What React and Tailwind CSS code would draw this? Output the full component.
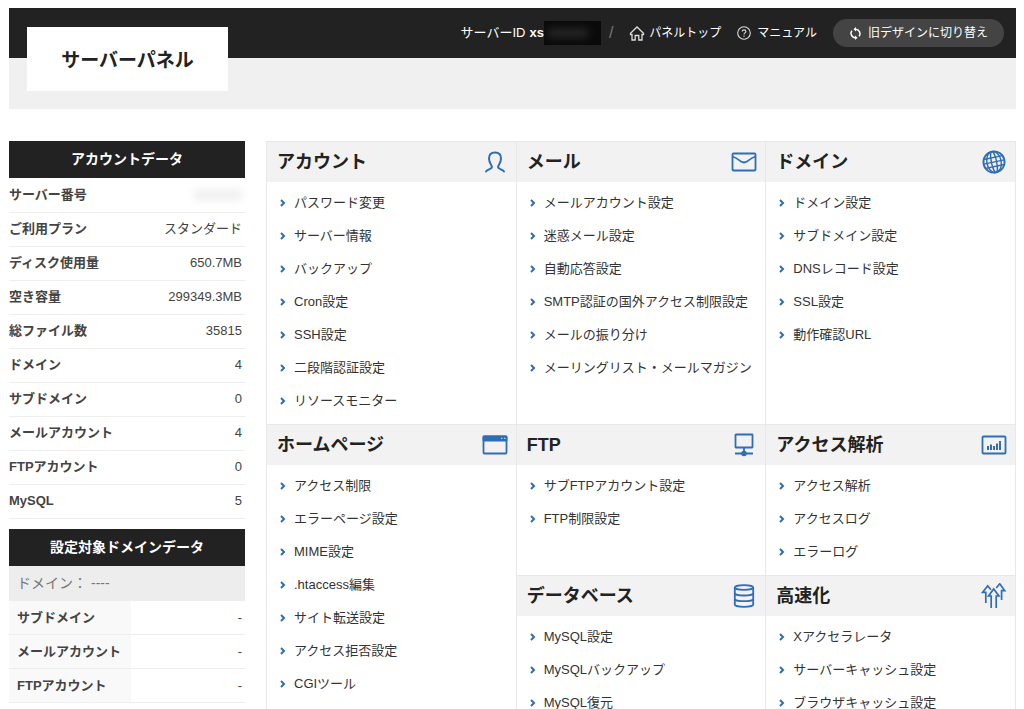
import React from 'react';

const accountData = [
  { label: 'サーバー番号', value: '' },
  { label: 'ご利用プラン', value: 'スタンダード' },
  { label: 'ディスク使用量', value: '650.7MB' },
  { label: '空き容量', value: '299349.3MB' },
  { label: '総ファイル数', value: '35815' },
  { label: 'ドメイン', value: '4' },
  { label: 'サブドメイン', value: '0' },
  { label: 'メールアカウント', value: '4' },
  { label: 'FTPアカウント', value: '0' },
  { label: 'MySQL', value: '5' },
];

const domainData = [
  { label: 'サブドメイン', value: '-' },
  { label: 'メールアカウント', value: '-' },
  { label: 'FTPアカウント', value: '-' },
];

const menus = {
  account: {
    title: 'アカウント',
    items: ['パスワード変更', 'サーバー情報', 'バックアップ', 'Cron設定', 'SSH設定', '二段階認証設定', 'リソースモニター'],
  },
  mail: {
    title: 'メール',
    items: ['メールアカウント設定', '迷惑メール設定', '自動応答設定', 'SMTP認証の国外アクセス制限設定', 'メールの振り分け', 'メーリングリスト・メールマガジン'],
  },
  domain: {
    title: 'ドメイン',
    items: ['ドメイン設定', 'サブドメイン設定', 'DNSレコード設定', 'SSL設定', '動作確認URL'],
  },
  homepage: {
    title: 'ホームページ',
    items: ['アクセス制限', 'エラーページ設定', 'MIME設定', '.htaccess編集', 'サイト転送設定', 'アクセス拒否設定', 'CGIツール'],
  },
  ftp: {
    title: 'FTP',
    items: ['サブFTPアカウント設定', 'FTP制限設定'],
  },
  access: {
    title: 'アクセス解析',
    items: ['アクセス解析', 'アクセスログ', 'エラーログ'],
  },
  database: {
    title: 'データベース',
    items: ['MySQL設定', 'MySQLバックアップ', 'MySQL復元'],
  },
  speed: {
    title: '高速化',
    items: ['Xアクセラレータ', 'サーバーキャッシュ設定', 'ブラウザキャッシュ設定'],
  },
};

const Icon = ({ children }) => (
  <svg
    className="h-[26px] w-[26px] shrink-0 text-[#2f6db5]"
    viewBox="0 0 26 26"
    fill="none"
    stroke="currentColor"
    strokeWidth="1.8"
    strokeLinejoin="round"
    aria-hidden="true"
  >
    {children}
  </svg>
);

const icons = {
  account: (
    <Icon>
      <path
        strokeWidth="2"
        strokeLinecap="round"
        d="M4 22.500c.8-2.200 6-2.300 6-4.500 0-1.600-3-3.500-3-8.500 0-3.800 2-6 6-6s6 2.200 6 6c0 5-3 6.900-3 8.500 0 2.200 5.200 2.300 6 4.500"
      />
    </Icon>
  ),
  mail: (
    <Icon>
      <rect x="1.500" y="4.500" width="23" height="17" rx="1" />
      <path d="M1.500 7.500c4 1.300 6.500 3.500 8.500 5 2 1.300 4 1.300 6 0 2-1.500 4.500-3.700 8.500-5" />
    </Icon>
  ),
  domain: (
    <Icon>
      <g transform="rotate(-12 13 13)" strokeWidth="1.4">
        <circle cx="13" cy="13" r="10.600" strokeWidth="1.800" />
        <ellipse cx="13" cy="13" rx="7.200" ry="10.600" />
        <ellipse cx="13" cy="13" rx="2.600" ry="10.600" />
        <path d="M2.500 13h21M3.600 8.500h18.800M3.600 17.500h18.800" />
      </g>
    </Icon>
  ),
  homepage: (
    <Icon>
      <rect x="1.500" y="4.500" width="23" height="17" rx="1" />
      <path d="M1.500 4.500h23v4h-23z" fill="currentColor" />
      <path d="M19 6.300h1.500M22 6.300h1.500" stroke="#a9c6e6" strokeWidth="1.300" />
    </Icon>
  ),
  ftp: (
    <Icon>
      <rect x="4.500" y="2.500" width="17" height="13" rx=".5" />
      <path d="M13 15.500v4.500M4 21.500h18" />
      <circle cx="13" cy="21.500" r="1.900" fill="currentColor" />
    </Icon>
  ),
  access: (
    <Icon>
      <rect x="1.500" y="4.500" width="23" height="17" rx="1" />
      <path d="M7 18v-4M10 18v-5.500M13 18v-4M16 18v-6.500M19 18v-9" strokeWidth="2" />
    </Icon>
  ),
  database: (
    <Icon>
      <ellipse cx="13" cy="4.500" rx="9.200" ry="2.300" />
      <path d="M3.800 4.500v17c0 1.300 4.200 2.300 9.200 2.300s9.200-1 9.200-2.300v-17" />
      <path d="M3.800 10.200c0 1.300 4.200 2.300 9.200 2.300s9.200-1 9.200-2.300M3.800 15.900c0 1.300 4.200 2.300 9.200 2.300s9.200-1 9.200-2.300" />
    </Icon>
  ),
  speed: (
    <Icon>
      <path
        strokeLinejoin="miter"
        strokeWidth="1.7"
        d="M4.800 20V9.300H1.700L6.700 2.800l3.200 4M15.300 5l3.400-4.200 5 6.800h-3.100V17M10.200 25V13H7.500l5.200-7 5.200 7h-2.700v12"
      />
    </Icon>
  ),
};

const Panel = ({ name, className = '' }) => {
  const { title, items } = menus[name];
  return (
    <section className={`border-r border-t border-[#e8e8e8] ${className}`}>
      <div className="flex h-10 items-center justify-between bg-[#f2f2f2] pl-2.5 pr-2">
        <h2 className="text-[18px] leading-6 font-bold text-[#222]">{title}</h2>
        {icons[name]}
      </div>
      <ul className="pt-1 pb-[7px]">
        {items.map((item) => (
          <li key={item}>
            <a href="#" className="flex h-[33px] items-center gap-2 pl-3 text-[13px] whitespace-nowrap text-[#333]">
              <svg className="h-2 w-[7px] shrink-0" viewBox="0 0 7 8" fill="none" stroke="#2f6db5" strokeWidth="2" aria-hidden="true">
                <path d="M2 1l3 3-3 3" />
              </svg>
              {item}
            </a>
          </li>
        ))}
      </ul>
    </section>
  );
};

const Header = () => (
  <header className="bg-[#f0f0f0] pb-[51px]">
    <div className="flex h-[50px] items-start justify-between bg-[#222] pr-3 pl-[18px]">
      <h1 className="mt-[19px] flex h-16 w-[201px] shrink-0 items-center justify-center bg-white pt-1 text-[19px] font-bold text-[#222]">
        サーバーパネル
      </h1>
      <div className="flex h-[50px] items-center text-[12px] whitespace-nowrap text-white">
        <span className="text-[13px]">サーバーID</span>
        <b className="ml-1 text-[13px]">xs</b>
        <span className="h-6 w-[57px] bg-[#0a0a0a] px-1 py-2">
          <span className="block h-2 w-10 bg-[#2c2c2c] blur-xs" />
        </span>
        <span className="mx-2 text-[16px] text-[#777]">/</span>
        <a href="#" className="ml-2 flex items-center gap-1">
          <svg className="h-4 w-4" viewBox="0 0 16 16" fill="none" stroke="#ddd" strokeWidth="1.3" aria-hidden="true">
            <path d="M1.500 9.500v-1.200L8 2l6.500 6.300v1.200H13V15H9.800v-4.500H6.200V15H3V9.500z" />
          </svg>
          パネルトップ
        </a>
        <a href="#" className="ml-4 flex items-center gap-1.5">
          <svg className="h-[14px] w-[14px]" viewBox="0 0 14 14" fill="none" stroke="#ddd" strokeWidth="1.100" aria-hidden="true">
            <circle cx="7" cy="7" r="6.300" />
            <path d="M5.200 5.600c0-2.400 3.700-2.300 3.700-.1C8.900 6.900 7 6.900 7 8.400M7 9.500v1.200" />
          </svg>
          マニュアル
        </a>
        <button type="button" className="ml-4 flex h-7 items-center gap-1.5 rounded-full bg-[#444] px-4">
          <svg className="h-[13px] w-[13px]" viewBox="0 0 13 13" aria-hidden="true">
            <path
              d="M6.500 2.200a4.600 4.600 0 0 1 3.700 7.200M6.500 10.800a4.600 4.600 0 0 1-3.700-7.200"
              fill="none"
              stroke="white"
              strokeWidth="1.500"
            />
            <path d="M7 0v4.400L4.500 2.200zM6 8.600V13l2.500-2.200z" fill="white" />
          </svg>
          旧デザインに切り替え
        </button>
      </div>
    </div>
  </header>
);

const Sidebar = () => (
  <aside className="w-[236px] shrink-0 text-[13px] text-[#444]">
    <h2 className="flex h-[37px] items-center justify-center bg-[#222] text-[14px] font-bold text-white">
      アカウントデータ
    </h2>
    <table className="w-full">
      <tbody>
        {accountData.map((row) => (
          <tr key={row.label} className="h-[34px] border-b border-[#eee]">
            <th scope="row" className="text-left font-bold">{row.label}</th>
            <td className="pr-[3px] text-right">
              {row.value || <span className="ml-auto block h-2.5 w-12 bg-[#eee] blur-xs" />}
            </td>
          </tr>
        ))}
      </tbody>
    </table>

    <h2 className="mt-2.5 flex h-[37px] items-center justify-center bg-[#222] text-[14px] font-bold text-white">
      設定対象ドメインデータ
    </h2>
    <p className="flex h-[35px] items-center bg-[#ededed] pl-2 text-[14px] text-[#777]">
      ドメイン：<span className="ml-1">----</span>
    </p>
    <table className="w-full">
      <tbody>
        {domainData.map((row) => (
          <tr key={row.label} className="h-[34px] border-b border-[#eee]">
            <th scope="row" className="w-[122px] bg-[#f9f9f9] pl-2 text-left font-bold">{row.label}</th>
            <td className="pr-[3px] text-right">{row.value}</td>
          </tr>
        ))}
      </tbody>
    </table>
  </aside>
);

const App = () => {
  return (
    <div className="h-screen overflow-hidden bg-white pt-2 pr-2 pl-[9px] font-['Liberation_Sans','Noto_Sans_CJK_JP',sans-serif]">
      <Header />
      <div className="mt-8 flex gap-[21px]">
        <Sidebar />
        <main className="grid grow grid-cols-3 items-stretch border-l border-[#e8e8e8]">
          <Panel name="account" />
          <Panel name="mail" />
          <Panel name="domain" />
          <Panel name="homepage" className="row-span-2" />
          <Panel name="ftp" />
          <Panel name="access" />
          <Panel name="database" />
          <Panel name="speed" />
        </main>
      </div>
    </div>
  );
};

export default App;
